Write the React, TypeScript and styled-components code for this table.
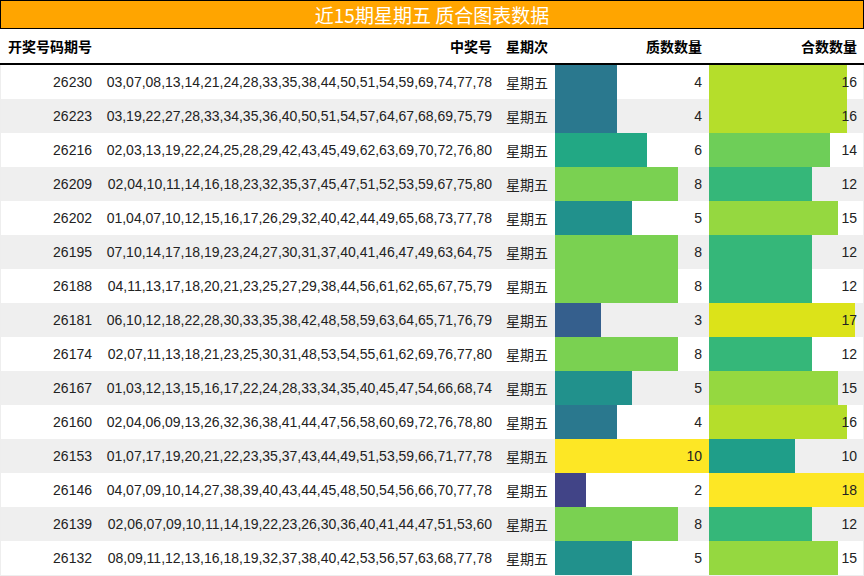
import React from "react";
import styled, { createGlobalStyle } from "styled-components";

const GlobalStyle = createGlobalStyle`
  html, body { margin: 0; padding: 0; background: #ffffff; }
  body { font-family: "Liberation Sans", "Noto Sans CJK SC", Arial, sans-serif; }
`;

type Row = { id: string; nums: string; p: number; c: number };

const rows: Row[] = [
  { id: "26230", nums: "03,07,08,13,14,21,24,28,33,35,38,44,50,51,54,59,69,74,77,78", p: 4, c: 16 },
  { id: "26223", nums: "03,19,22,27,28,33,34,35,36,40,50,51,54,57,64,67,68,69,75,79", p: 4, c: 16 },
  { id: "26216", nums: "02,03,13,19,22,24,25,28,29,42,43,45,49,62,63,69,70,72,76,80", p: 6, c: 14 },
  { id: "26209", nums: "02,04,10,11,14,16,18,23,32,35,37,45,47,51,52,53,59,67,75,80", p: 8, c: 12 },
  { id: "26202", nums: "01,04,07,10,12,15,16,17,26,29,32,40,42,44,49,65,68,73,77,78", p: 5, c: 15 },
  { id: "26195", nums: "07,10,14,17,18,19,23,24,27,30,31,37,40,41,46,47,49,63,64,75", p: 8, c: 12 },
  { id: "26188", nums: "04,11,13,17,18,20,21,23,25,27,29,38,44,56,61,62,65,67,75,79", p: 8, c: 12 },
  { id: "26181", nums: "06,10,12,18,22,28,30,33,35,38,42,48,58,59,63,64,65,71,76,79", p: 3, c: 17 },
  { id: "26174", nums: "02,07,11,13,18,21,23,25,30,31,48,53,54,55,61,62,69,76,77,80", p: 8, c: 12 },
  { id: "26167", nums: "01,03,12,13,15,16,17,22,24,28,33,34,35,40,45,47,54,66,68,74", p: 5, c: 15 },
  { id: "26160", nums: "02,04,06,09,13,26,32,36,38,41,44,47,56,58,60,69,72,76,78,80", p: 4, c: 16 },
  { id: "26153", nums: "01,07,17,19,20,21,22,23,35,37,43,44,49,51,53,59,66,71,77,78", p: 10, c: 10 },
  { id: "26146", nums: "04,07,09,10,14,27,38,39,40,43,44,45,48,50,54,56,66,70,77,78", p: 2, c: 18 },
  { id: "26139", nums: "02,06,07,09,10,11,14,19,22,23,26,30,36,40,41,44,47,51,53,60", p: 8, c: 12 },
  { id: "26132", nums: "08,09,11,12,13,16,18,19,32,37,38,40,42,53,56,57,63,68,77,78", p: 5, c: 15 },
];

const primeColor: Record<number, string> = {
  2: "#414487",
  3: "#355f8d",
  4: "#2a788e",
  5: "#21918c",
  6: "#22a884",
  7: "#44bf70",
  8: "#7ad151",
  9: "#bddf26",
  10: "#fde725",
};

const compColor: Record<number, string> = {
  10: "#1f9e89",
  11: "#26ad81",
  12: "#35b779",
  13: "#54c568",
  14: "#6ece58",
  15: "#95d840",
  16: "#b5de2b",
  17: "#dce319",
  18: "#fde725",
};

const COLS = "100px 400px 55px 154px 155px";

const Page = styled.div`
  width: 864px;
  height: 576px;
  overflow: hidden;
  display: flex;
  flex-direction: column;
  color: #222;
  font-size: 14px;
`;

const TitleBar = styled.div`
  height: 27px;
  border: 1px solid #000;
  background: #ffa500;
  color: #ffffff;
  font-family: "Noto Sans CJK SC", "Liberation Sans", sans-serif;
  font-size: 19px;
  display: flex;
  align-items: center;
  justify-content: center;
`;

const HeaderRow = styled.div`
  display: grid;
  grid-template-columns: ${COLS};
  height: 34px;
  border-bottom: 2px solid #000;
  font-weight: bold;
  color: #000;
`;

const Body = styled.div`
  display: flex;
  flex-direction: column;
  border-bottom: 1px solid #eeeeee;
`;

const BodyRow = styled.div<{ $alt: boolean }>`
  display: grid;
  grid-template-columns: ${COLS};
  height: 34px;
  background: ${(p) => (p.$alt ? "#efefef" : "#ffffff")};
  box-shadow: inset 1px 0 #eeeeee, inset -1px 0 #eeeeee;
`;

const Cell = styled.div<{ $align?: "left" | "right"; $pad?: number }>`
  display: flex;
  align-items: center;
  justify-content: ${(p) => (p.$align === "left" ? "flex-start" : "flex-end")};
  padding: ${(p) => (p.$align === "left" ? `0 0 0 ${p.$pad ?? 6}px` : `0 ${p.$pad ?? 8}px 0 0`)};
  white-space: nowrap;
  overflow: hidden;
`;

const BarCell = styled.div`
  position: relative;
  display: flex;
  align-items: center;
  justify-content: flex-end;
  padding-right: 7px;
`;

const Bar = styled.div<{ $color: string }>`
  position: absolute;
  left: 0;
  top: 0;
  bottom: 0;
  background: ${(p) => p.$color};
`;

const Value = styled.span`
  position: relative;
`;

export default function App() {
  return (
    <>
      <GlobalStyle />
      <Page>
        <TitleBar>近15期星期五 质合图表数据</TitleBar>
        <HeaderRow>
          <Cell $pad={8}>开奖号码期号</Cell>
          <Cell $pad={8}>中奖号</Cell>
          <Cell $align="left" $pad={6}>星期次</Cell>
          <Cell $pad={7}>质数数量</Cell>
          <Cell $pad={7}>合数数量</Cell>
        </HeaderRow>
        <Body>
          {rows.map((r, i) => (
            <BodyRow key={r.id} $alt={i % 2 === 1}>
              <Cell $pad={8}>{r.id}</Cell>
              <Cell $pad={8}>{r.nums}</Cell>
              <Cell $align="left" $pad={6}>星期五</Cell>
              <BarCell>
                <Bar $color={primeColor[r.p]} style={{ width: `${(r.p / 10) * 100}%` }} />
                <Value>{r.p}</Value>
              </BarCell>
              <BarCell>
                <Bar $color={compColor[r.c]} style={{ width: `${(r.c / 18) * 100}%` }} />
                <Value>{r.c}</Value>
              </BarCell>
            </BodyRow>
          ))}
        </Body>
      </Page>
    </>
  );
}
